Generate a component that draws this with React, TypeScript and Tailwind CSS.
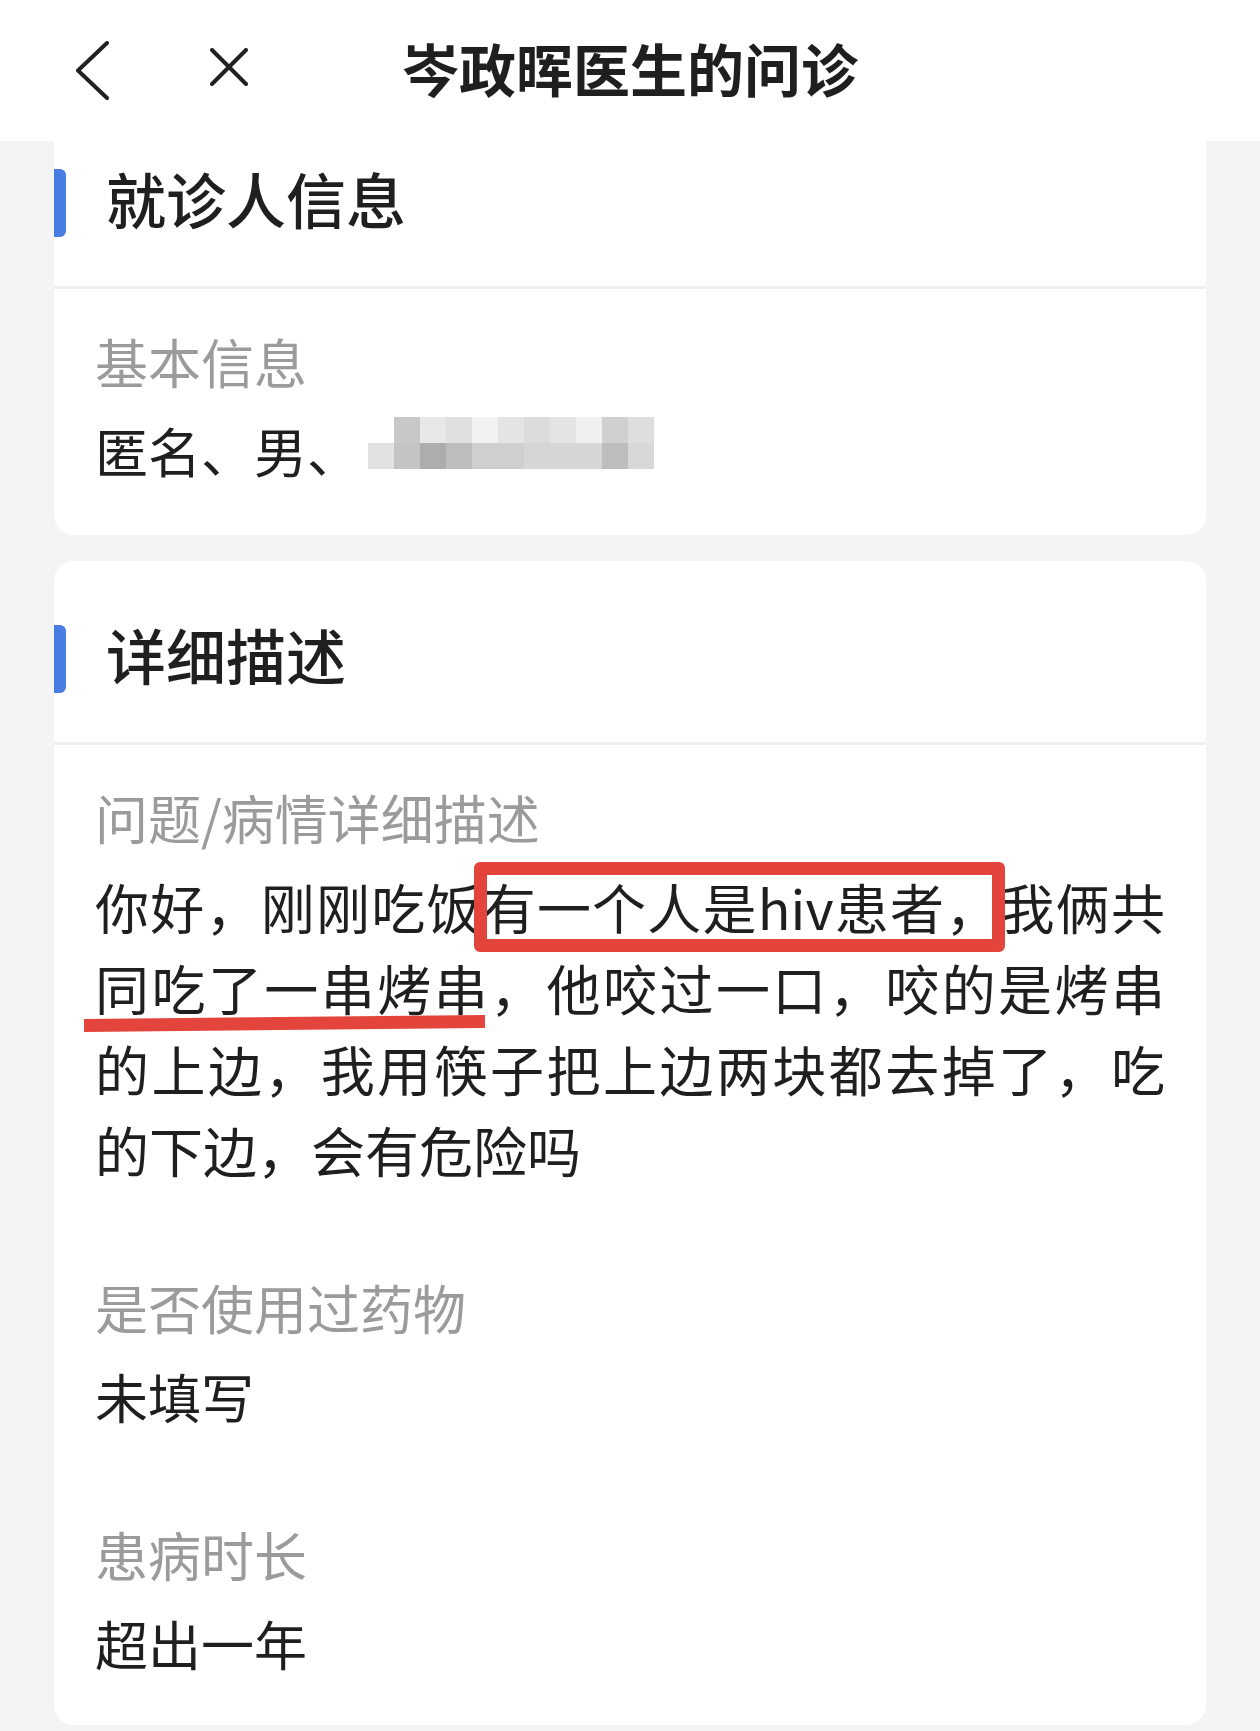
import React from "react";

const FONT = "font-['Noto_Sans_CJK_SC','Noto_Sans',sans-serif]";

const mosaicTop = ["#ffffff", "#c8c8c8", "#e8e8e8", "#e0e0e0", "#f2f2f2", "#e4e4e4", "#dcdcdc", "#e4e4e4", "#f0f0f0", "#d0d0d0", "#dedede"];
const mosaicBottom = ["#e2e2e2", "#c4c4c4", "#adadad", "#bdbdbd", "#cfcfcf", "#cfcfcf", "#d6d6d6", "#d6d6d6", "#d6d6d6", "#bdbdbd", "#d8d8d8"];

function Mosaic() {
  return (
    <span className="inline-flex flex-col align-middle ml-[8px] -translate-y-[16px]">
      <span className="flex">
        {mosaicTop.map((c, i) => (
          <span key={i} className="block w-[26px] h-[26px]" style={{ backgroundColor: c }} />
        ))}
      </span>
      <span className="flex">
        {mosaicBottom.map((c, i) => (
          <span key={i} className="block w-[26px] h-[26px]" style={{ backgroundColor: c }} />
        ))}
      </span>
    </span>
  );
}

function SectionTitle({ title }: { title: string }) {
  return (
    <div className="h-[181px] flex items-center pt-[15px]">
      <div className="w-[12px] h-[68px] bg-[#4a7de3] rounded-r-[6px]" />
      <div className="ml-[40px] mb-[10px] text-[60px] leading-none font-medium text-[#1f1f1f]">{title}</div>
    </div>
  );
}

function Label({ children }: { children: React.ReactNode }) {
  return <div className="text-[53px] leading-[74px] text-[#9b9b9b]">{children}</div>;
}

function Value({ children }: { children: React.ReactNode }) {
  return <div className="mt-[12px] text-[53px] leading-[81px] text-[#1f1f1f]">{children}</div>;
}

export default function App() {
  return (
    <div className={`w-[1260px] h-[1731px] overflow-hidden bg-[#f4f4f4] ${FONT}`}>
      {/* Header */}
      <div className="relative z-10 h-[141px] bg-white flex">
        <div className="w-[260px] flex items-start">
          <svg className="ml-[76px] mt-[41px]" width="34" height="59" viewBox="0 0 34 59" fill="none">
            <path d="M31 2 L2 29.5 L31 57" stroke="#222" strokeWidth="4" strokeLinecap="round" strokeLinejoin="round" />
          </svg>
          <svg className="ml-[100px] mt-[48px]" width="38" height="38" viewBox="0 0 38 38" fill="none">
            <path d="M2 2 L36 36 M36 2 L2 36" stroke="#222" strokeWidth="4" strokeLinecap="round" />
          </svg>
        </div>
        <div className="flex-1 flex items-center justify-center pb-[6px]">
          <span className="text-[57px] leading-none font-bold text-[#1f1f1f]">岑政晖医生的问诊</span>
        </div>
        <div className="w-[260px]" />
      </div>

      {/* Card 1 */}
      <div className="mx-[54px] -mt-[36px] bg-white rounded-[20px]">
        <SectionTitle title="就诊人信息" />
        <div className="h-[3px] bg-[#efefef]" />
        <div className="pt-[35px] pb-[44px] px-[41px]">
          <Label>基本信息</Label>
          <Value>
            <span>匿名、男、</span>
            <Mosaic />
          </Value>
        </div>
      </div>

      {/* Card 2 */}
      <div className="mx-[54px] mt-[26px] bg-white rounded-[20px]">
        <SectionTitle title="详细描述" />
        <div className="h-[3px] bg-[#efefef]" />
        <div className="pt-[35px] pb-[41px] px-[41px]">
          <Label>问题/病情详细描述</Label>
          <div className="relative mt-[12px]">
            <p className="text-[54px] leading-[81px] text-[#1f1f1f] text-justify">
              你好，刚刚吃饭有一个人是hiv患者，我俩共同吃了一串烤串，他咬过一口，咬的是烤串的上边，我用筷子把上边两块都去掉了，吃的下边，会有危险吗
            </p>
            <div className="absolute left-[379px] top-[-4px] w-[531px] h-[90px] border-[13px] border-[#e3443b] rounded-[6px]" />
            <div className="absolute left-[-11px] top-[151px] w-[401px] h-[13px] bg-[#e3443b] -rotate-[0.6deg]" />
          </div>

          <div className="mt-[80px]">
            <Label>是否使用过药物</Label>
            <Value>未填写</Value>
          </div>

          <div className="mt-[80px]">
            <Label>患病时长</Label>
            <Value>超出一年</Value>
          </div>
        </div>
      </div>
    </div>
  );
}
